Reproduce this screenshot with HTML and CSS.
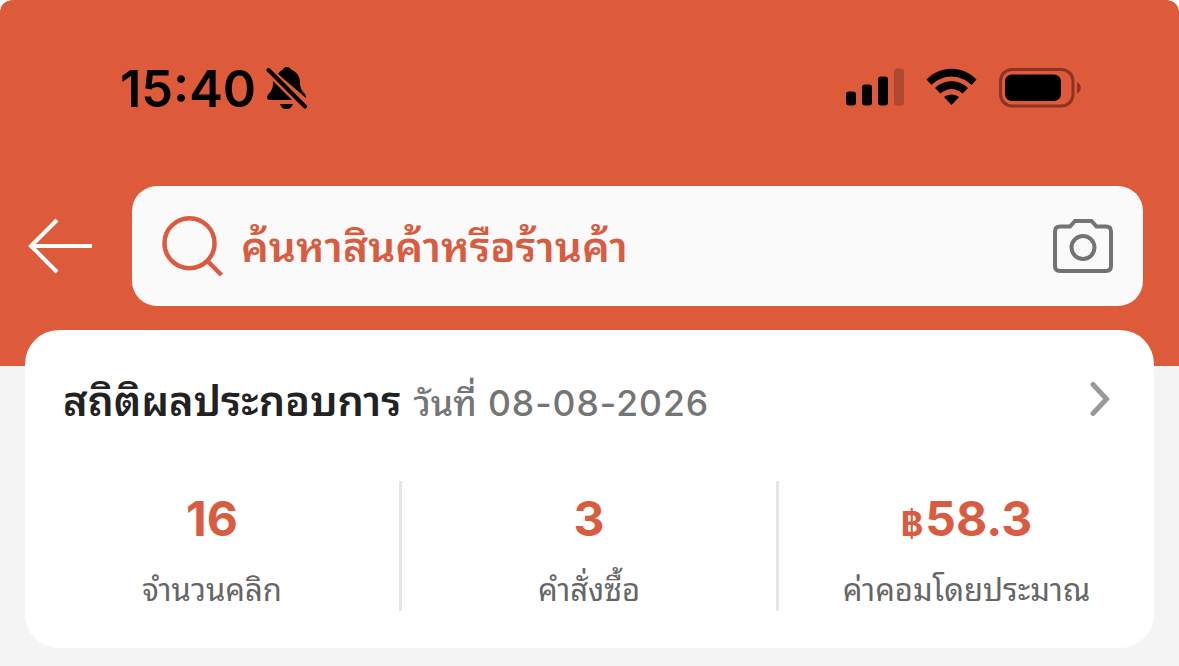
FILE: index.html
```
<!DOCTYPE html>
<html lang="th">
<head>
<meta charset="UTF-8">
<meta name="viewport" content="width=device-width, initial-scale=1.0">
<title>สถิติผลประกอบการ</title>
<link rel="stylesheet" href="styles.css">
</head>
<body>
<header class="header">
    <div class="status-bar">
        <div class="status-left">
            <span class="time">15:40</span>
            <svg class="bell" width="42" height="44" viewBox="0 0 42 44">
                <path d="M12 8C14 5 16 4 17 3.500C18 1.500 19 1 21 1C23 1 24.500 2 25 3.500C31 6 33.500 10 34 16C34 21 35 24 39 28Q40 30 40 32Z"/>
                <path d="M7 15L26 34H4Q1 34 1 31C1 29 3 28 5 25C7 22 7 19 7 15Z"/>
                <path d="M14 38H27C26 41 24 43 20.500 43S15 41 14 38Z"/>
                <path class="slash" d="M2.500 4L39 40.500"/>
            </svg>
        </div>
        <div class="status-right">
            <svg width="58" height="38" viewBox="0 0 58 38">
                <rect x="0" y="23.500" width="10" height="14" rx="3"/>
                <rect x="16" y="16.500" width="10" height="21" rx="3"/>
                <rect x="32" y="8.500" width="10" height="29" rx="3"/>
                <rect class="faded" x="48" y="0.500" width="10" height="37" rx="3"/>
            </svg>
            <svg class="wifi" width="51" height="38" viewBox="0 0 51 38">
                <path d="M0.500 11.500C14 -3 37 -3 50.500 11.500L45.500 17C34 5.500 17 5.500 5.500 17Z"/>
                <path d="M9 20C18 11 33 11 42 20L36.500 25.500C30 19.500 21 19.500 14.500 25.500Z"/>
                <path d="M18 29C22 25.500 29 25.500 33 29L25.500 37Z"/>
            </svg>
            <svg class="battery" width="83" height="40" viewBox="0 0 83 40">
                <rect class="battery-case" x="1.500" y="1.500" width="72.500" height="36.500" rx="11.500"/>
                <rect x="6" y="6.500" width="56" height="26.500" rx="7"/>
                <path class="battery-cap" d="M78 14C83 16.500 83 23 78 25.500Z"/>
            </svg>
        </div>
    </div>
    <div class="search-row">
        <svg class="back" width="66" height="56" viewBox="0 0 66 56">
            <path d="M30 2L4 28L30 54M4 28H65"/>
        </svg>
        <div class="search-box">
            <svg class="search-icon" width="62" height="62" viewBox="0 0 62 62">
                <circle cx="27.500" cy="28.200" r="25"/>
                <path d="M46 46.500L59.500 60"/>
            </svg>
            <span class="search-text">ค้นหาสินค้าหรือร้านค้า</span>
            <svg class="camera" width="60" height="54" viewBox="0 0 60 54">
                <path d="M7 7.500H17L22 2H38.500L43.500 7.500H53Q58 7.500 58 12.500V47Q58 52 53 52H7Q2 52 2 47V12.500Q2 7.500 7 7.500Z"/>
                <circle cx="30" cy="28.500" r="11.500"/>
            </svg>
        </div>
    </div>
</header>

<main class="card">
    <div class="card-head">
        <div class="title">
            <h1>สถิติผลประกอบการ</h1>
            <span class="date-label">วันที่</span>
            <span class="date">08-08-2026</span>
        </div>
        <svg class="chevron" width="20" height="36" viewBox="0 0 20 36">
            <path d="M3 3.500L16.500 18L3 32.500"/>
        </svg>
    </div>
    <div class="stats">
        <div class="stat">
            <div class="value">16</div>
            <div class="label">จำนวนคลิก</div>
        </div>
        <div class="stat">
            <div class="value">3</div>
            <div class="label">คำสั่งซื้อ</div>
        </div>
        <div class="stat">
            <div class="value"><span class="baht">฿</span>58.3</div>
            <div class="label">ค่าคอมโดยประมาณ</div>
        </div>
    </div>
</main>
</body>
</html>
```

FILE: styles.css
```
* {
    box-sizing: border-box;
}

html {
    background: #fff;
}

body {
    margin: 0;
    height: 666px;
    overflow: hidden;
    border-radius: 12px 12px 0 0;
    background: #f4f4f4;
    font-family: Inter, "Noto Sans Thai Looped", "Noto Sans Thai", "Noto Sans", sans-serif;
}

svg {
    display: block;
    flex: none;
}

.header {
    height: 366px;
    border-radius: 12px 12px 0 0;
    background: #dd5a3b;
}

.status-bar {
    display: flex;
    justify-content: space-between;
    height: 186px;
    padding: 66px 97px 0 120px;
}

.status-left, .status-right {
    display: flex;
    align-items: flex-start;
}

.time {
    font-size: 50.5px;
    line-height: 45px;
    font-weight: 600;
}

.bell {
    margin-left: 10px;
}

.slash {
    stroke: #000;
    stroke-width: 4;
    stroke-linecap: round;
}

.status-right {
    padding-top: 2px;
}

.faded {
    opacity: 0.2;
}

.wifi {
    margin-left: 22px;
}

.battery {
    margin-left: 22px;
}

.battery-case {
    fill: none;
    stroke: #8f3221;
    stroke-width: 3;
}

.battery-cap {
    fill: #8f3221;
}

.search-row {
    display: flex;
    align-items: center;
    height: 120px;
    padding: 0 36px 0 27px;
}

.back {
    fill: none;
    stroke: #fff;
    stroke-width: 4;
}

.search-box {
    display: flex;
    align-items: center;
    flex: 1;
    height: 120px;
    margin-left: 39px;
    padding: 0 30px;
    border-radius: 25px;
    background: #fafafa;
}

.search-icon {
    fill: none;
    stroke: #d95c40;
    stroke-width: 4.5;
}

.search-text {
    margin-left: 17px;
    padding-bottom: 6px;
    color: #d95c40;
    font-size: 42.3px;
    font-weight: 600;
    white-space: nowrap;
}

.camera {
    margin-left: auto;
    fill: none;
    stroke: #737373;
    stroke-width: 4;
}

.card {
    height: 318px;
    margin: -36px 25px 0;
    border-radius: 34px;
    background: #fff;
}

.card-head {
    display: flex;
    align-items: center;
    justify-content: space-between;
    height: 151px;
    padding: 0 44px 14px 38px;
    white-space: nowrap;
}

.title {
    display: flex;
    align-items: baseline;
    padding-bottom: 2px;
}

h1 {
    margin: 0;
    color: #222;
    font-size: 41.5px;
    font-weight: 600;
}

.date-label {
    margin-left: 12px;
    color: #757575;
    font-size: 35.5px;
    font-weight: 500;
}

.date {
    margin-left: 11px;
    color: #757575;
    font-size: 35.5px;
    font-weight: 500;
    letter-spacing: 1px;
}

.chevron {
    fill: none;
    stroke: #999;
    stroke-width: 5;
    stroke-linecap: round;
}

.stats {
    display: grid;
    grid-template-columns: 377px 377px 375px;
}

.stat {
    height: 130px;
    border-right: 3px solid #e6e6e6;
    text-align: center;
    white-space: nowrap;
}

.stat:last-child {
    border-right: none;
}

.value {
    height: 76px;
    color: #d95c40;
    font-size: 48px;
    line-height: 75px;
    font-weight: 700;
}

.baht {
    margin-right: 2px;
    font-size: 34px;
}

.label {
    color: #666;
    font-size: 31px;
    line-height: 66px;
}
```
